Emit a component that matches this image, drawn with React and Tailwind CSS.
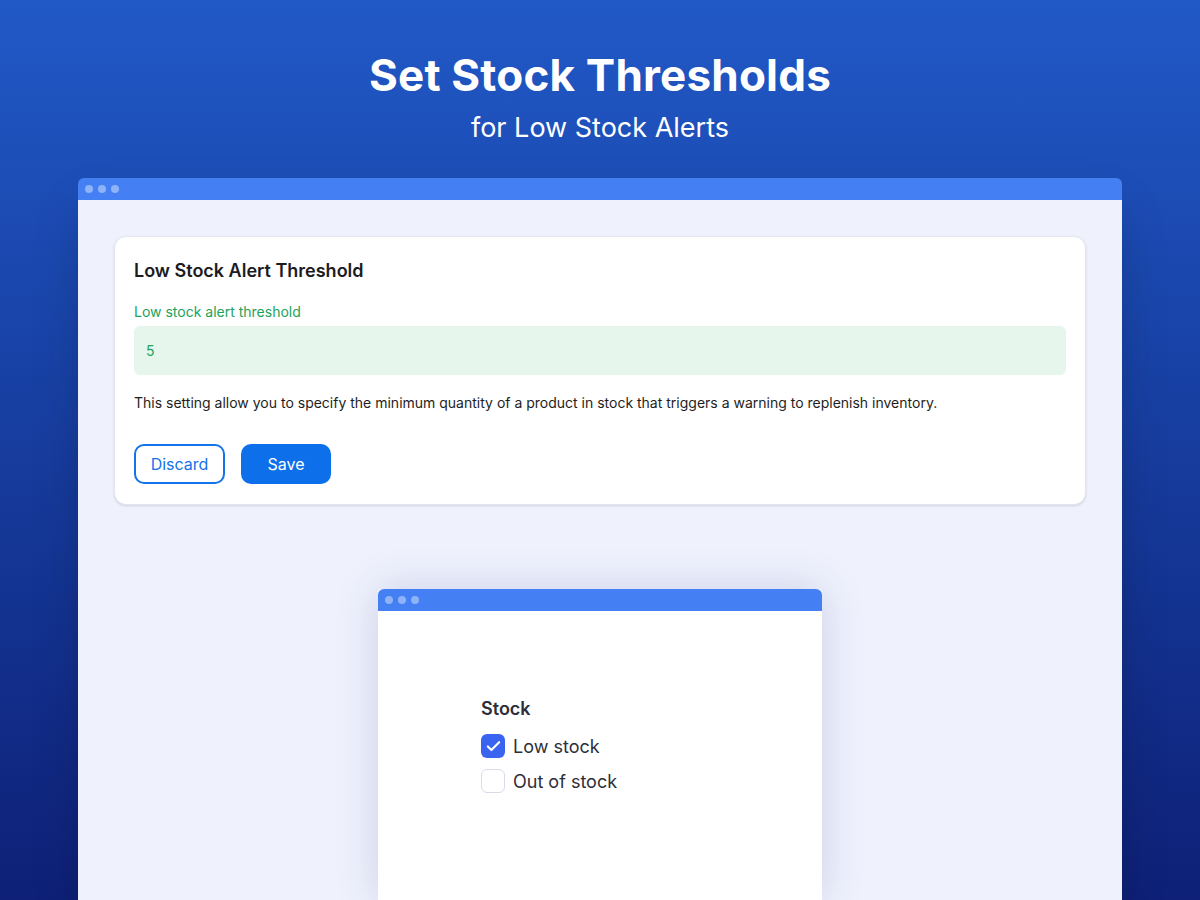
import { Check } from 'lucide-react';

function TitleBar() {
  return (
    <div className="h-[22px] bg-[#4480f4] rounded-t-[6px] flex items-center gap-[5px] pl-[7px]">
      <span className="w-2 h-2 rounded-full bg-[#8fb3f8]"></span>
      <span className="w-2 h-2 rounded-full bg-[#8fb3f8]"></span>
      <span className="w-2 h-2 rounded-full bg-[#8fb3f8]"></span>
    </div>
  );
}

function CheckRow({ checked, label }) {
  return (
    <div className="flex items-center gap-2 h-6">
      {checked ? (
        <span className="w-6 h-6 rounded-[6px] bg-[#3a63f0] flex items-center justify-center">
          <Check size={17} strokeWidth={3} className="text-white" />
        </span>
      ) : (
        <span className="w-6 h-6 rounded-[6px] border border-[#dadbe9] bg-white"></span>
      )}
      <span className="text-[18px] text-[#2d2e3a]">{label}</span>
    </div>
  );
}

export default function App() {
  return (
    <div
      className="h-[900px] w-full overflow-hidden flex flex-col items-center bg-gradient-to-b from-[#2159c7] to-[#0e2077]"
      style={{ fontFamily: 'Inter, "Noto Sans", sans-serif' }}
    >
      {/* header */}
      <h1 className="mt-[49px] text-[44px] leading-[52px] font-bold text-white tracking-[0.2px]">
        Set Stock Thresholds
      </h1>
      <p className="mt-[10px] text-[27px] leading-[34px] text-white">for Low Stock Alerts</p>

      {/* big window */}
      <div className="mt-[33px] w-[1044px] flex-1 flex flex-col shadow-2xl">
        <TitleBar />
        <div className="flex-1 bg-[#eff2fd] px-9 pt-9 flex flex-col items-center">
          <div className="w-full bg-white rounded-xl border border-[#e4e5ee] shadow-sm px-[19px] pt-[22px] pb-5">
            <h2 className="text-[18px] leading-6 font-semibold text-[#1b1b1f]">Low Stock Alert Threshold</h2>
            <div className="mt-[19px] text-[14px] leading-5 text-[#22a35a]">Low stock alert threshold</div>
            <div className="mt-[4px] h-[49px] rounded-md bg-[#e6f6ed] flex items-center px-3 text-[14px] text-[#22a35a]">
              5
            </div>
            <p className="mt-[18px] text-[14px] leading-5 text-[#1e1e22]">
              This setting allow you to specify the minimum quantity of a product in stock that triggers a warning to replenish inventory.
            </p>
            <div className="mt-[31px] flex gap-4">
              <button className="w-[91px] h-10 rounded-[10px] border-2 border-[#1472ea] text-[#1472ea] text-[16px]">
                Discard
              </button>
              <button className="w-[90px] h-10 rounded-[10px] bg-[#0d6fe9] text-white text-[16px]">
                Save
              </button>
            </div>
          </div>

          {/* small window */}
          <div className="mt-[84px] w-[444px] flex-1 flex flex-col shadow-[0_0_40px_rgba(40,50,120,0.18)]">
            <TitleBar />
            <div className="flex-1 bg-white pl-[103px] pt-[86px]">
              <div className="text-[18px] leading-6 font-semibold text-[#2d2e3a]">Stock</div>
              <div className="mt-[13px] flex flex-col gap-[11px]">
                <CheckRow checked label="Low stock" />
                <CheckRow label="Out of stock" />
              </div>
            </div>
          </div>
        </div>
      </div>
    </div>
  );
}
